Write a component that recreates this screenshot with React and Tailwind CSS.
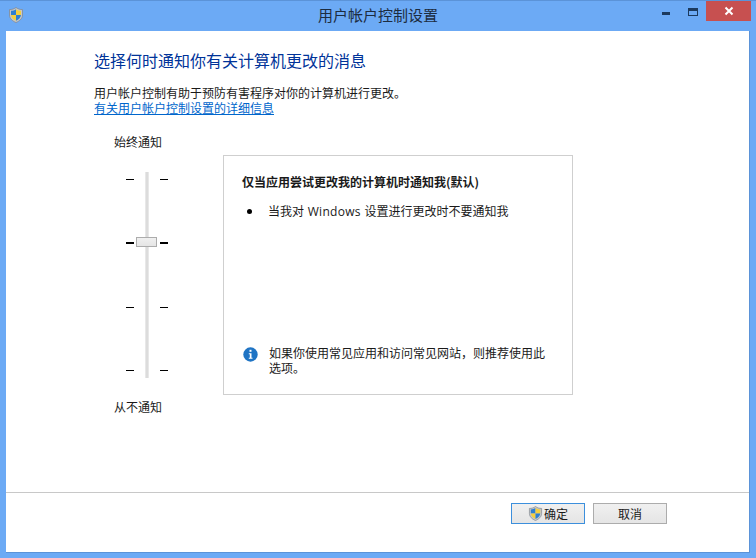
import React from "react";

const font = { fontFamily: '"Noto Sans CJK SC", "Liberation Sans", sans-serif' };

function Shield({ size = 16 }) {
  return (
    <svg width={size} height={size} viewBox="0 0 16 16" className="shrink-0">
      <path d="M8 .5C6 2 4 2.6 1.5 2.6V8c0 3.6 3 6 6.5 7.5 3.5-1.500 6.500-3.900 6.500-7.500V2.600C12 2.600 10 2 8 .5z" fill="#c4c7cb" stroke="#7d838b" strokeWidth=".7" />
      <path d="M8 2.200C6.500 3.200 5 3.700 3 3.800V8h5z" fill="#2f7fd1" />
      <path d="M8 2.200V8h5V3.800c-2-.1-3.500-.6-5-1.600z" fill="#f5cf3d" />
      <path d="M3 8c.2 2.700 2.400 4.500 5 5.800V8z" fill="#f5cf3d" />
      <path d="M8 8v5.800c2.600-1.300 4.800-3.100 5-5.800z" fill="#2f7fd1" />
    </svg>
  );
}

function Tick({ bold }) {
  return <div className={bold ? "w-[8px] h-[2px] bg-black" : "w-[8px] h-[1px] bg-black"} />;
}

function TickColumn() {
  return (
    <div className="flex flex-col items-center justify-between h-[193px]">
      <Tick />
      <Tick bold />
      <Tick />
      <Tick />
    </div>
  );
}

function Slider() {
  return (
    <div className="w-[48px] flex flex-col items-center text-[12px] leading-[16px] text-[#1a1a1a]">
      <div>始终通知</div>
      <div className="relative mt-[22px] ml-[12px] self-start w-[42px] h-[206px] flex justify-between items-center">
        <TickColumn />
        <div className="w-[4px] h-[206px] bg-[#dcdcdc] border-x border-[#e8e8e8]" />
        <TickColumn />
        <div className="absolute left-[10px] top-[65px] w-[21px] h-[10px] border border-[#acacac] bg-gradient-to-b from-[#f0f0f0] to-[#e5e5e5]" />
      </div>
      <div className="mt-[21px]">从不通知</div>
    </div>
  );
}

function Panel() {
  return (
    <div className="w-[350px] h-[240px] mt-[21px] border border-[#cfcfcf] px-[18px] pt-[18px] pb-[19px] flex flex-col text-[12px] leading-[15px] text-[#1a1a1a]">
      <div className="font-bold leading-[16px]">仅当应用尝试更改我的计算机时通知我(默认)</div>
      <div className="flex items-center mt-[13px] h-[16px]">
        <div className="w-[5px] h-[5px] rounded-full bg-black ml-[5px]" />
        <div className="ml-[16px]">
          当我对 <span className="font-['Open_Sans'] tracking-[0.3px] mx-[1px]">Windows</span> 设置进行更改时不要通知我
        </div>
      </div>
      <div className="flex mt-auto">
        <svg width="15" height="15" viewBox="0 0 15 15" className="shrink-0 mt-[2px] ml-[1px]">
          <circle cx="7.500" cy="7.500" r="7.200" fill="#1f74c4" />
          <rect x="6.500" y="2.800" width="2" height="2" fill="#fff" />
          <path d="M5.800 6.200h2.700v4.600h1v1H5.800v-1h1V7.200h-1z" fill="#fff" />
        </svg>
        <div className="ml-[11px] w-[284px]">如果你使用常见应用和访问常见网站，则推荐使用此选项。</div>
      </div>
    </div>
  );
}

export default function App() {
  return (
    <div style={font} className="w-[756px] h-[558px] bg-[#6caaf5] flex flex-col border-t border-[#5b93d8] overflow-hidden">
      <div className="h-[30px] flex items-start relative shrink-0">
        <div className="ml-[8px] mt-[6px]">
          <Shield />
        </div>
        <div className="flex-1 mr-[24px] text-center text-[15px] leading-[28px] text-[#1c2c40]">用户帐户控制设置</div>
        <div className="absolute left-[662px] top-[11px] w-[8px] h-[3px] bg-[#1c3a5e]" />
        <div className="absolute left-[688px] top-[7px] w-[10px] h-[8px] border border-t-[3px] border-[#1c3a5e]" />
        <div className="absolute left-[706px] top-0 w-[45px] h-[20px] bg-[#c75050] flex items-center justify-center">
          <svg width="10" height="10" viewBox="0 0 10 10">
            <path d="M1.500 1.500l7 7M8.500 1.500l-7 7" stroke="#fff" strokeWidth="2" />
          </svg>
        </div>
      </div>
      <div className="flex-1 mx-[6px] mb-[5px] bg-white flex flex-col border-b border-r border-[#5b93d8]">
        <div className="h-[461px] pl-[88px] pt-[19px] shrink-0">
          <h1 className="text-[16px] leading-[20px] text-[#003399]">选择何时通知你有关计算机更改的消息</h1>
          <p className="mt-[15px] text-[12px] leading-[15px] text-[#1a1a1a]">用户帐户控制有助于预防有害程序对你的计算机进行更改。</p>
          <a className="block text-[12px] leading-[15px] text-[#0066cc] underline">有关用户帐户控制设置的详细信息</a>
          <div className="flex mt-[19px] items-start">
            <div className="ml-[20px]">
              <Slider />
            </div>
            <div className="ml-[61px]">
              <Panel />
            </div>
          </div>
        </div>
        <div className="flex-1 border-t border-[#c8c8c8] flex justify-end items-start pt-[10px] pr-[82px] gap-[8px] text-[12px] text-[#1a1a1a]">
          <button className="w-[74px] h-[21px] border border-[#3c8fdc] bg-gradient-to-b from-[#f0f0f0] to-[#e5e5e5] flex items-center justify-center">
            <Shield size={15} />
            <span className="ml-[1px]">确定</span>
          </button>
          <button className="w-[74px] h-[21px] border border-[#acacac] bg-gradient-to-b from-[#f0f0f0] to-[#e5e5e5] flex items-center justify-center">
            取消
          </button>
        </div>
      </div>
    </div>
  );
}
